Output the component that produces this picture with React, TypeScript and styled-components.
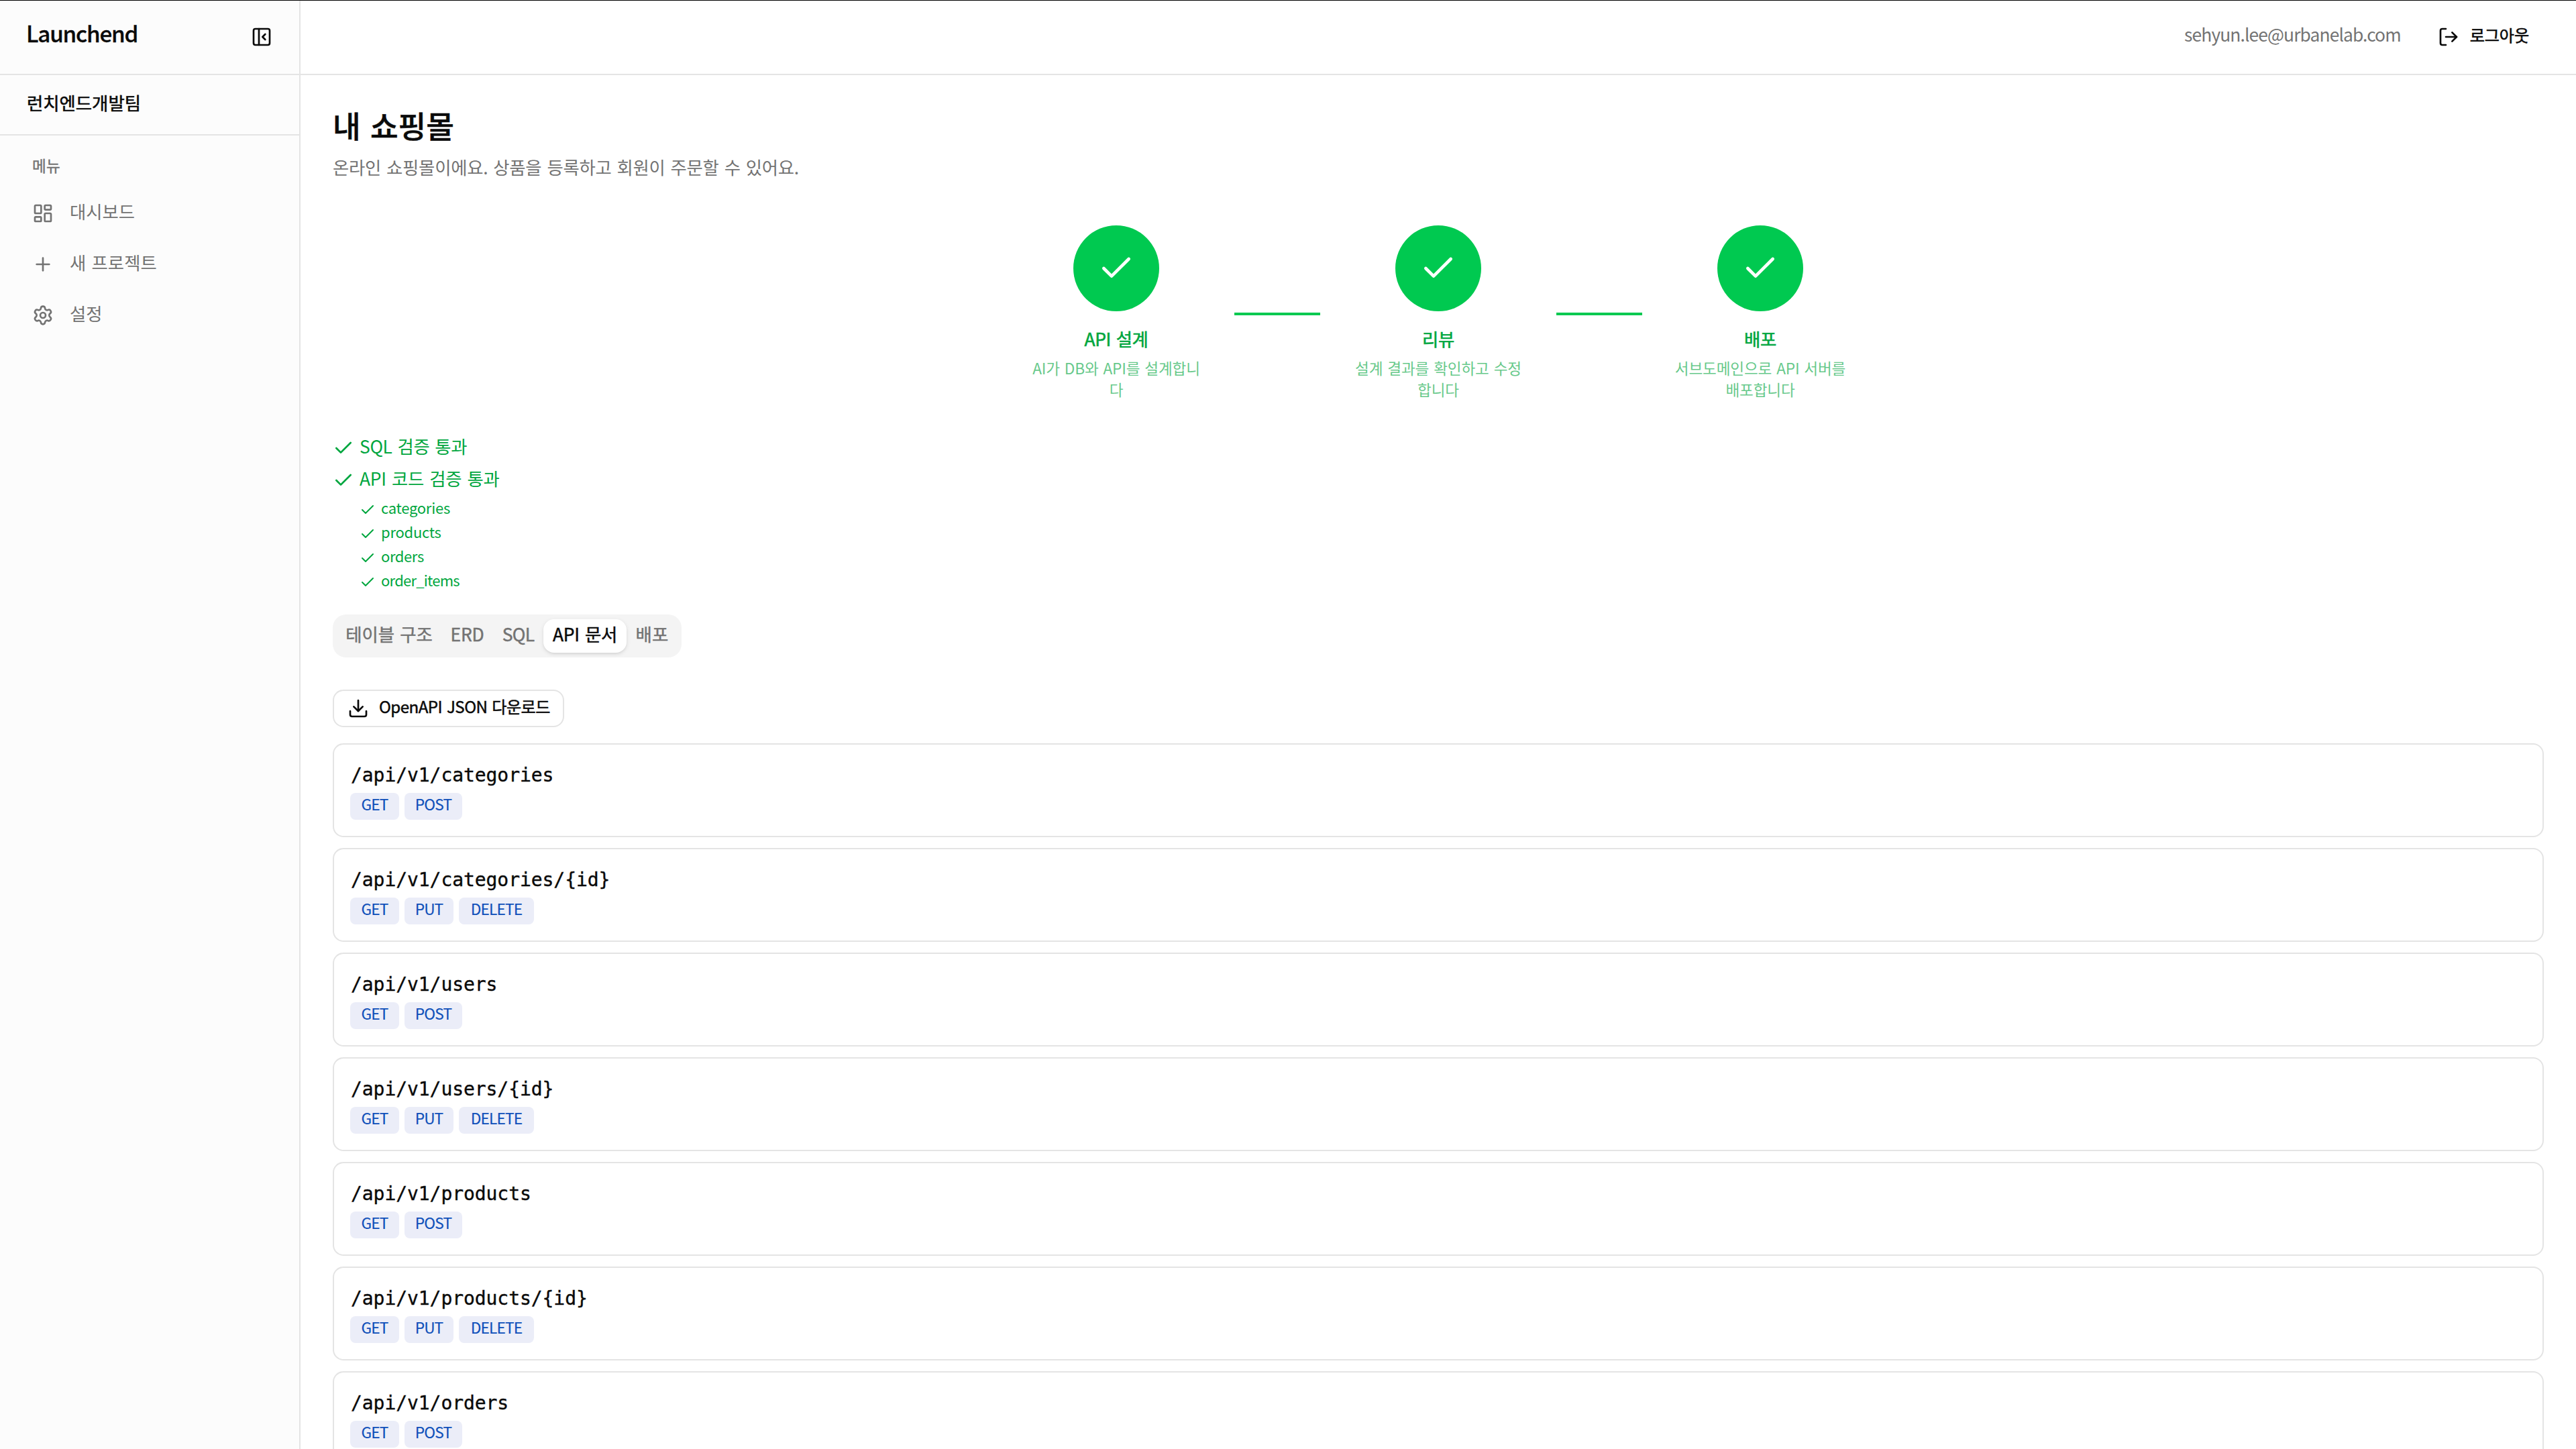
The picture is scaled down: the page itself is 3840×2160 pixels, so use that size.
import React from "react";
import styled, { createGlobalStyle } from "styled-components";
import {
  Check,
  Download,
  LayoutDashboard,
  LogOut,
  PanelLeftClose,
  Plus,
  Settings,
} from "lucide-react";

const color = {
  text: "#0a0a0a",
  muted: "#737373",
  border: "#e4e4e4",
  sidebar: "#fcfcfc",
  tabs: "#f4f4f4",
  green: "#00c950",
  greenText: "#00a63e",
  badge: "#ebedf8",
  badgeText: "#0f50ba",
};

const GlobalStyle = createGlobalStyle`
  * { box-sizing: border-box; }
  html, body { margin: 0; padding: 0; background: #fff; }
  body {
    height: 2160px;
    overflow: hidden;
    color: ${color.text};
    font-family: "Noto Sans CJK KR", "Noto Sans", sans-serif;
    font-size: 26.4px;
  }
  button { font-family: inherit; color: inherit; cursor: pointer; }
  svg { flex: none; display: block; }
`;

/* Single text run, raised slightly so glyphs sit optically centred in the line. */
const Label = styled.span<{
  $size?: number;
  $weight?: number;
  $track?: number;
  $line?: number;
  $stroke?: number;
  $raise?: number;
}>`
  display: block;
  white-space: nowrap;
  font-size: ${(p) => p.$size ?? 26.4}px;
  font-weight: ${(p) => p.$weight ?? 400};
  letter-spacing: ${(p) => p.$track ?? 0}px;
  word-spacing: 0.09em;
  line-height: ${(p) => p.$line ?? 40}px;
  margin: ${(p) => -(p.$raise ?? 0.13)}em 0 ${(p) => p.$raise ?? 0.13}em;
  -webkit-text-stroke: ${(p) => p.$stroke ?? 0}px currentColor;
`;

const Hairline = styled.div`
  position: fixed;
  inset: 0 0 auto 0;
  height: 1px;
  background: #000;
  z-index: 10;
`;

const Shell = styled.div`
  display: flex;
  width: 100%;
  height: 2160px;
  overflow: hidden;
`;

const Sidebar = styled.aside`
  flex: none;
  width: 448px;
  display: flex;
  flex-direction: column;
  background: ${color.sidebar};
  border-right: 2px solid ${color.border};
`;

const SidebarHeader = styled.div`
  flex: none;
  display: flex;
  align-items: center;
  justify-content: space-between;
  height: 112px;
  padding: 0 40px 0 39px;
  border-bottom: 2px solid ${color.border};
`;

const IconButton = styled.button`
  display: flex;
  padding: 0;
  border: 0;
  background: none;
`;

const Team = styled.div`
  flex: none;
  display: flex;
  align-items: center;
  height: 90px;
  padding: 0 40px;
  border-bottom: 2px solid ${color.border};
`;

const Menu = styled.nav`
  display: flex;
  flex-direction: column;
  gap: 4px;
  padding: 16px;
  color: ${color.muted};
`;

const MenuTitle = styled.div`
  display: flex;
  align-items: center;
  height: 64px;
  margin-bottom: -4px;
  padding: 0 32px;
`;

const MenuItem = styled.a`
  display: flex;
  align-items: center;
  gap: 24px;
  height: 72px;
  padding: 0 20px;
  margin: 0 12px;
`;

const Page = styled.div`
  flex: 1;
  min-width: 0;
  display: flex;
  flex-direction: column;
`;

const TopBar = styled.header`
  flex: none;
  display: flex;
  align-items: center;
  justify-content: flex-end;
  gap: 55px;
  height: 112px;
  padding: 0 70px 0 48px;
  border-bottom: 2px solid ${color.border};
`;

const Email = styled.div`
  color: ${color.muted};
`;

const Logout = styled.button`
  display: flex;
  align-items: center;
  gap: 16px;
  padding: 0;
  border: 0;
  background: none;
`;

const Main = styled.main`
  flex: none;
  display: flex;
  flex-direction: column;
  padding: 48px;
`;

const Heading = styled.div`
  display: flex;
  flex-direction: column;
  gap: 8px;
`;

const Subtitle = styled.div`
  color: ${color.muted};
`;

const Steps = styled.section`
  display: flex;
  align-items: center;
  justify-content: center;
  gap: 48px;
  margin-top: 64px;
`;

const Step = styled.div`
  width: 256px;
  display: flex;
  flex-direction: column;
  align-items: center;
  color: ${color.greenText};
`;

const StepCircle = styled.div`
  display: flex;
  align-items: center;
  justify-content: center;
  width: 128px;
  height: 128px;
  margin-bottom: 24px;
  border-radius: 50%;
  background: ${color.green};
  color: #fff;
`;

const StepText = styled.div`
  display: flex;
  flex-direction: column;
  align-items: center;
  margin-top: 8px;
  opacity: 0.6;
`;

const Connector = styled.div`
  width: 128px;
  height: 4px;
  background: ${color.green};
`;

const Checks = styled.section`
  display: flex;
  flex-direction: column;
  gap: 8px;
  margin-top: 48px;
  color: ${color.greenText};
`;

const CheckRow = styled.div<{ $nested?: boolean }>`
  display: flex;
  align-items: center;
  gap: 8px;
  height: ${(p) => (p.$nested ? 32 : 40)}px;
`;

const NestedChecks = styled.div`
  display: flex;
  flex-direction: column;
  gap: 4px;
  padding-left: 40px;
`;

const Tabs = styled.div`
  align-self: flex-start;
  display: flex;
  align-items: center;
  height: 64px;
  margin-top: 32px;
  padding: 0 6px;
  border-radius: 20px;
  background: ${color.tabs};
`;

const Tab = styled.button<{ $active?: boolean; $width: number }>`
  display: flex;
  align-items: center;
  justify-content: center;
  width: ${(p) => p.$width}px;
  height: 50px;
  padding: 0;
  border: 0;
  border-radius: 16px;
  color: ${(p) => (p.$active ? color.text : color.muted)};
  background: ${(p) => (p.$active ? "#fff" : "transparent")};
  box-shadow: ${(p) =>
    p.$active ? "0 2px 6px rgba(0,0,0,0.1), 0 2px 4px -2px rgba(0,0,0,0.1)" : "none"};
`;

const DownloadButton = styled.button`
  align-self: flex-start;
  display: flex;
  align-items: center;
  gap: 15px;
  width: 345px;
  height: 56px;
  margin-top: 48px;
  padding: 0 20px;
  border: 2px solid ${color.border};
  border-radius: 16px;
  background: #fff;
`;

const Endpoints = styled.section`
  display: flex;
  flex-direction: column;
  gap: 16px;
  margin-top: 24px;
`;

const Card = styled.article`
  display: flex;
  flex-direction: column;
  gap: 6px;
  height: 140px;
  padding: 26px 24px 24px;
  border: 2px solid ${color.border};
  border-radius: 16px;
`;

const Path = styled.code`
  padding-left: 1px;
  font-family: "DejaVu Sans Mono", "Liberation Mono", monospace;
  font-size: 28px;
  line-height: 40px;
  letter-spacing: -0.06px;
  -webkit-text-stroke: 0.4px currentColor;
`;

const Methods = styled.div`
  display: flex;
  gap: 8px;
`;

const Badge = styled.span<{ $width: number }>`
  display: flex;
  align-items: center;
  justify-content: center;
  width: ${(p) => p.$width}px;
  height: 40px;
  border-radius: 8px;
  background: ${color.badge};
  color: ${color.badgeText};
`;

const menu = [
  { icon: LayoutDashboard, label: "대시보드" },
  { icon: Plus, label: "새 프로젝트" },
  { icon: Settings, label: "설정" },
];

const steps = [
  { title: "API 설계", lines: ["AI가 DB와 API를 설계합니", "다"] },
  { title: "리뷰", lines: ["설계 결과를 확인하고 수정", "합니다"] },
  { title: "배포", lines: ["서브도메인으로 API 서버를", "배포합니다"] },
];

const tables = [
  { name: "categories", track: -0.25 },
  { name: "products", track: -0.25 },
  { name: "orders", track: -0.4 },
  { name: "order_items", track: -0.75 },
];

const tabs = [
  { label: "테이블 구조", width: 156, track: 0 },
  { label: "ERD", width: 77, track: -0.2 },
  { label: "SQL", width: 75, track: -0.7 },
  { label: "API 문서", width: 124, track: -0.2, active: true },
  { label: "배포", width: 76, track: 0.2 },
];

const methodWidth: Record<string, number> = { GET: 73, POST: 86, PUT: 73, DELETE: 112 };

const collection = ["GET", "POST"];
const item = ["GET", "PUT", "DELETE"];
const endpoints = [
  { path: "/api/v1/categories", methods: collection },
  { path: "/api/v1/categories/{id}", methods: item },
  { path: "/api/v1/users", methods: collection },
  { path: "/api/v1/users/{id}", methods: item },
  { path: "/api/v1/products", methods: collection },
  { path: "/api/v1/products/{id}", methods: item },
  { path: "/api/v1/orders", methods: collection },
];

export default function App() {
  return (
    <>
      <GlobalStyle />
      <Hairline />
      <Shell>
        <Sidebar>
          <SidebarHeader>
            <Label $size={33.2} $weight={500} $track={-1.2} $stroke={0.3} $raise={0.17}>
              Launchend
            </Label>
            <IconButton aria-label="사이드바 접기">
              <PanelLeftClose size={32} />
            </IconButton>
          </SidebarHeader>
          <Team>
            <Label $stroke={0.6}>런치엔드개발팀</Label>
          </Team>
          <Menu>
            <MenuTitle>
              <Label $size={22.6} $stroke={0.4} $track={0.3}>메뉴</Label>
            </MenuTitle>
            {menu.map(({ icon: Icon, label }) => (
              <MenuItem key={label}>
                <Icon size={32} />
                <Label $track={0}>{label}</Label>
              </MenuItem>
            ))}
          </Menu>
        </Sidebar>

        <Page>
          <TopBar>
            <Email>
              <Label $track={-0.9} $raise={0.15}>sehyun.lee@urbanelab.com</Label>
            </Email>
            <Logout>
              <LogOut size={32} />
              <Label $size={24.1} $stroke={0.6} $track={-0.1}>로그아웃</Label>
            </Logout>
          </TopBar>

          <Main>
            <Heading>
              <Label as="h1" $size={45.3} $weight={500} $stroke={0.5} $track={0} $line={64}>
                내 쇼핑몰
              </Label>
              <Subtitle>
                <Label $track={-0.26}>
                  온라인 쇼핑몰이에요. 상품을 등록하고 회원이 주문할 수 있어요.
                </Label>
              </Subtitle>
            </Heading>

            <Steps>
              {steps.map((step, i) => (
                <React.Fragment key={step.title}>
                  {i > 0 && <Connector />}
                  <Step>
                    <StepCircle>
                      <Check size={56} />
                    </StepCircle>
                    <Label $stroke={0.6} $track={-0.4}>{step.title}</Label>
                    <StepText>
                      {step.lines.map((line) => (
                        <Label key={line} $size={22.6} $track={-0.15} $line={32}>{line}</Label>
                      ))}
                    </StepText>
                  </Step>
                </React.Fragment>
              ))}
            </Steps>

            <Checks>
              <CheckRow>
                <Check size={32} />
                <Label $track={-0.35}>SQL 검증 통과</Label>
              </CheckRow>
              <CheckRow>
                <Check size={32} />
                <Label $track={-0.2}>API 코드 검증 통과</Label>
              </CheckRow>
              <NestedChecks>
                {tables.map((t) => (
                  <CheckRow key={t.name} $nested>
                    <Check size={24} />
                    <Label $size={22} $track={t.track} $line={32} $raise={0.18}>{t.name}</Label>
                  </CheckRow>
                ))}
              </NestedChecks>
            </Checks>

            <Tabs>
              {tabs.map((t) => (
                <Tab key={t.label} $width={t.width} $active={t.active}>
                  <Label $stroke={0.5} $track={t.track}>{t.label}</Label>
                </Tab>
              ))}
            </Tabs>

            <DownloadButton>
              <Download size={32} />
              <Label $size={24.1} $stroke={0.5} $track={-0.55}>OpenAPI JSON 다운로드</Label>
            </DownloadButton>

            <Endpoints>
              {endpoints.map((e) => (
                <Card key={e.path}>
                  <Path>{e.path}</Path>
                  <Methods>
                    {e.methods.map((m) => (
                      <Badge key={m} $width={methodWidth[m]}>
                        <Label $size={22.6} $track={-0.8} $line={32} $stroke={0.2} $raise={0.15}>
                          {m}
                        </Label>
                      </Badge>
                    ))}
                  </Methods>
                </Card>
              ))}
            </Endpoints>
          </Main>
        </Page>
      </Shell>
    </>
  );
}
